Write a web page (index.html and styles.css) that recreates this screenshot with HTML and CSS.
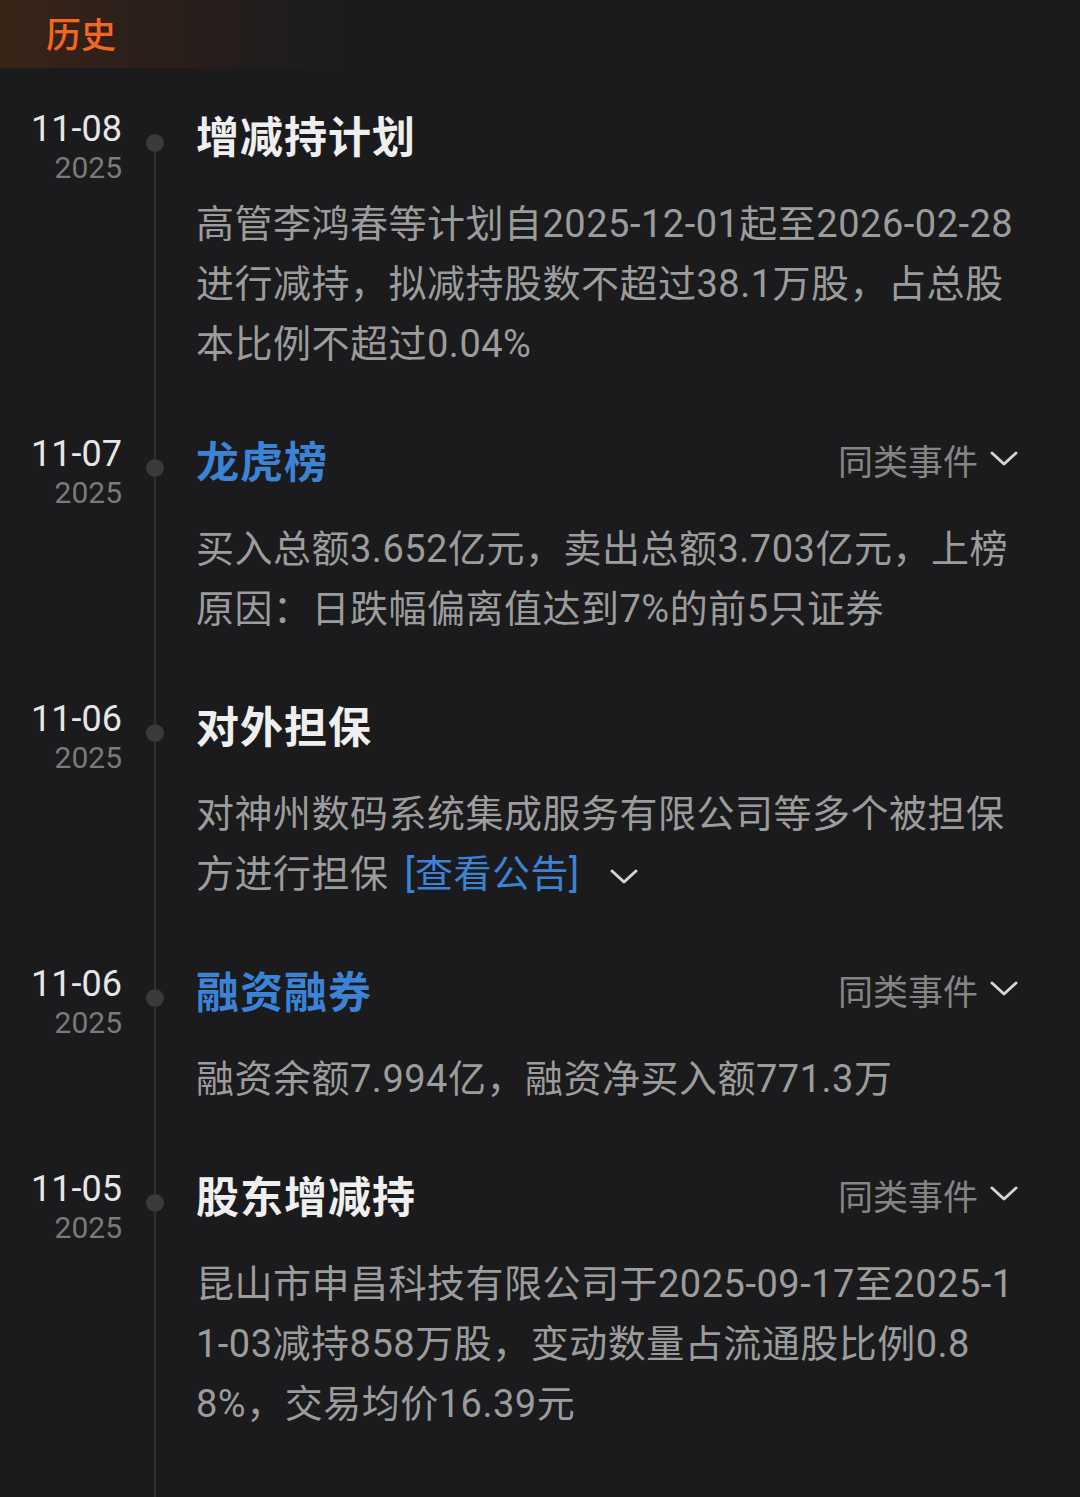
FILE: index.html
```
<!DOCTYPE html>
<html lang="zh-CN">
<head>
  <meta charset="UTF-8" />
  <meta name="viewport" content="width=device-width, initial-scale=1.0" />
  <title>历史</title>
  <link rel="stylesheet" href="styles.css">
</head>
<body>

  <header class="tab-bar">
    <div class="tab-title">历史</div>
  </header>

  <main class="timeline">

    <div class="tl-item first">
      <div class="tl-date">
        <div class="md">11-08</div>
        <div class="year">2025</div>
      </div>
      <div class="tl-rail"><span class="line-top"></span><span class="dot"></span><span class="line-bottom"></span></div>
      <div class="tl-body">
        <div class="tl-head">
          <h2>增减持计划</h2>
        </div>
        <p>高管李鸿春等计划自2025-12-01起至2026-02-28进行减持，拟减持股数不超过38.1万股，占总股本比例不超过0.04%</p>
      </div>
    </div>

    <div class="tl-item">
      <div class="tl-date">
        <div class="md">11-07</div>
        <div class="year">2025</div>
      </div>
      <div class="tl-rail"><span class="line-top"></span><span class="dot"></span><span class="line-bottom"></span></div>
      <div class="tl-body">
        <div class="tl-head">
          <h2 class="link">龙虎榜</h2>
          <div class="similar">同类事件 <svg viewBox="0 0 28 16" width="28" height="16"><path d="M2 2 L14 13 L26 2" /></svg></div>
        </div>
        <p>买入总额3.652亿元，卖出总额3.703亿元，上榜原因：日跌幅偏离值达到7%的前5只证券</p>
      </div>
    </div>

    <div class="tl-item">
      <div class="tl-date">
        <div class="md">11-06</div>
        <div class="year">2025</div>
      </div>
      <div class="tl-rail"><span class="line-top"></span><span class="dot"></span><span class="line-bottom"></span></div>
      <div class="tl-body">
        <div class="tl-head">
          <h2>对外担保</h2>
        </div>
        <p>对神州数码系统集成服务有限公司等多个被担保方进行担保<span class="notice">[查看公告]</span><svg class="expand" viewBox="0 0 28 16" width="28" height="16"><path d="M2 2 L14 13 L26 2" /></svg></p>
      </div>
    </div>

    <div class="tl-item">
      <div class="tl-date">
        <div class="md">11-06</div>
        <div class="year">2025</div>
      </div>
      <div class="tl-rail"><span class="line-top"></span><span class="dot"></span><span class="line-bottom"></span></div>
      <div class="tl-body">
        <div class="tl-head">
          <h2 class="link">融资融券</h2>
          <div class="similar">同类事件 <svg viewBox="0 0 28 16" width="28" height="16"><path d="M2 2 L14 13 L26 2" /></svg></div>
        </div>
        <p>融资余额7.994亿，融资净买入额771.3万</p>
      </div>
    </div>

    <div class="tl-item">
      <div class="tl-date">
        <div class="md">11-05</div>
        <div class="year">2025</div>
      </div>
      <div class="tl-rail"><span class="line-top"></span><span class="dot"></span><span class="line-bottom"></span></div>
      <div class="tl-body">
        <div class="tl-head">
          <h2>股东增减持</h2>
          <div class="similar">同类事件 <svg viewBox="0 0 28 16" width="28" height="16"><path d="M2 2 L14 13 L26 2" /></svg></div>
        </div>
        <p>昆山市申昌科技有限公司于2025-09-17至2025-11-03减持858万股，变动数量占流通股比例0.88%，交易均价16.39元</p>
      </div>
    </div>

  </main>

</body>
</html>
```

FILE: styles.css
```
* {
    box-sizing: border-box;
}
html {
    margin: 0;
    padding: 0;
}
body {
    margin: 0;
    padding: 0;
    width: 100%;
    height: 1497px;
    display: flex;
    flex-direction: column;
    background: #1b1b1d;
    font-family: Roboto, "Noto Sans CJK SC", sans-serif;
    overflow: hidden;
}
.tab-bar {
    flex: none;
    height: 68px;
    padding: 0 0 0 46px;
    display: flex;
    align-items: center;
    background: linear-gradient(90deg, #3a2418 0%, #2c1f1a 40%, #1b1b1d 100%);
    background-size: 340px 100%;
    background-repeat: no-repeat;
}
.tab-title {
    color: #f5661e;
    font-family: "Noto Sans CJK SC", sans-serif;
    font-size: 35px;
    font-weight: 500;
    line-height: 1;
    margin-top: -4px;
}
.timeline {
    flex: 1;
    display: flex;
    flex-direction: column;
    padding: 41px 0 0;
}
.tl-item {
    display: grid;
    grid-template-columns: 122px 66px 1fr;
    padding: 0 58px 60px 0;
}
.tl-item:last-child {
    flex: 1;
}
.tl-date {
    text-align: right;
}
.tl-date .md {
    font-size: 36px;
    line-height: 40px;
    color: #e6e6e6;
}
.tl-date .year {
    font-size: 30px;
    line-height: 38px;
    color: #7a7a7a;
}
.tl-rail {
    display: flex;
    flex-direction: column;
    align-items: center;
    margin-bottom: -60px;
}
.tl-rail .line-top {
    width: 2px;
    height: 25px;
    background: #303032;
}
.tl-item.first .line-top {
    background: transparent;
}
.tl-rail .dot {
    flex: none;
    width: 18px;
    height: 18px;
    border-radius: 50%;
    background: #3a3a3c;
}
.tl-rail .line-bottom {
    width: 2px;
    flex: 1;
    background: #303032;
}
.tl-body {
    padding-left: 8px;
    min-width: 0;
}
.tl-head {
    display: flex;
    align-items: center;
    justify-content: space-between;
    height: 50px;
    margin-bottom: 35px;
    padding-right: 4px;
}
.tl-head h2 {
    margin: 0;
    font-family: "Noto Sans CJK SC", sans-serif;
    font-size: 43px;
    font-weight: 700;
    letter-spacing: 1px;
    line-height: 50px;
    color: #efefef;
}
.tl-head h2.link {
    color: #3a83d6;
}
.similar {
    display: flex;
    align-items: center;
    gap: 12px;
    font-family: "Noto Sans CJK SC", sans-serif;
    font-size: 35px;
    color: #858585;
    line-height: 1;
}
.similar svg,
.expand {
    fill: none;
    stroke: #d4d4d4;
    stroke-width: 3;
    stroke-linecap: round;
    stroke-linejoin: round;
}
.expand {
    margin-left: 30px;
    vertical-align: middle;
}
.tl-body p {
    margin: 0;
    font-size: 38px;
    letter-spacing: 0.5px;
    line-height: 60px;
    color: #9c9c9c;
    word-break: break-all;
}
.notice {
    margin-left: 16px;
    color: #3a83d6;
}
```
